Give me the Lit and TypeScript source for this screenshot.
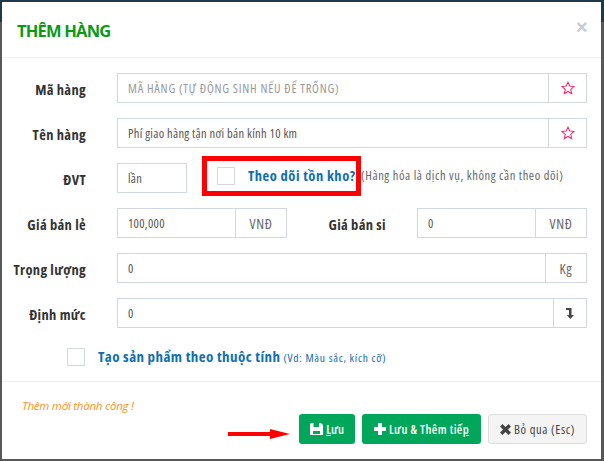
import { LitElement, html, css } from "lit";
import { customElement } from "lit/decorators.js";

const star = html`<svg class="star" viewBox="0 0 14 14" width="14" height="14"><path d="M7 1.2l1.75 3.9 4.15.45-3.1 2.85.87 4.15L7 10.45l-3.67 2.1.87-4.15L1.1 5.55l4.15-.45z" fill="none" stroke="#f0306e" stroke-width="1.1"/></svg>`;

@customElement("app-root")
export class AppRoot extends LitElement {
  static styles = css`
    :host { display: block; width: 604px; height: 461px; padding: 2px 0 0 2px; box-sizing: border-box; background: linear-gradient(#1c3a4a 0 22px, #585858 22px); overflow: hidden; font-family: "Open Sans", "Noto Sans", sans-serif; font-stretch: condensed; font-size: 12.5px; letter-spacing: .3px; color: #555; }
    .modal { width: 599px; height: 457px; background: #fff; display: flex; flex-direction: column; box-sizing: border-box; }
    .head { height: 56px; flex: none; box-sizing: border-box; border-bottom: 1px solid #eff2f5; display: flex; align-items: center; justify-content: space-between; padding: 0 13px 0 15px; }
    .title { font-size: 16.5px; font-weight: 700; color: #0a9a17; font-stretch: normal; letter-spacing: -.8px; margin-top: 1px; }
    .close { font-size: 20px; color: #ccc; line-height: 1; margin-top: -6px; font-family: "Liberation Sans", sans-serif; font-weight: 700; }
    .body { flex: 1; padding: 15px 14px 0 0; display: flex; flex-direction: column; gap: 15px; }
    .row { display: flex; height: 30px; align-items: stretch; }
    .label { width: 84px; flex: none; text-align: right; font-size: 14.5px; letter-spacing: .35px; font-weight: 700; color: #333; line-height: 34px; white-space: nowrap; }
    .group { display: flex; margin-left: 31px; }
    .grow { flex: 1; }
    .box { border: 1px solid #d3d7e0; box-sizing: border-box; height: 30px; display: flex; align-items: center; padding: 0 10px; color: #555; white-space: nowrap; }
    .input { flex: 1; min-width: 0; }
    .ph { color: #999; letter-spacing: .75px; }
    .addon { border-left: 0; justify-content: center; padding: 0; color: #666; font-size: 14px; letter-spacing: .6px; }
    .star { display: block; }
    .w38 { width: 38px; } .w70 { width: 70px; } .w119 { width: 119px; } .w51 { width: 51px; } .w41 { width: 41px; } .w33 { width: 33px; }
    .label2 { width: 99px; }
    .track { margin-left: 15px; width: 159px; height: 40px; margin-top: -7px; border: 5px solid #f00; box-sizing: border-box; display: flex; align-items: center; padding-left: 10px; flex: none; white-space: nowrap; }
    .check { width: 18px; height: 18px; border: 1px solid #d3d7e0; box-sizing: border-box; flex: none; background: #fff; }
    .blue { font-size: 14.5px; letter-spacing: .55px; font-weight: 700; color: #0e6eb0; white-space: nowrap; }
    .track .blue { margin-left: 13px; margin-top: -2px; }
    .note { color: #666; font-size: 12.5px; letter-spacing: .6px; white-space: nowrap; line-height: 26px; }
    .attr { display: flex; align-items: center; height: 30px; margin-left: 65px; margin-top: -1px; }
    .attr .blue { margin-left: 13px; margin-top: -2px; font-size: 15px; letter-spacing: .43px; }
    .attr small { font-size: 11.5px; letter-spacing: .75px; color: #0e6eb0; margin-left: 3px; }
    .foot { flex: none; height: 78px; box-sizing: border-box; border-top: 1px solid #eff2f5; padding: 17px 14px 0 20px; display: flex; flex-direction: column; }
    .msg { font-size: 11.5px; font-stretch: normal; letter-spacing: -.25px; font-style: italic; color: #f7941d; line-height: 14px; }
    .btns { display: flex; align-items: center; justify-content: flex-end; margin-top: 1px; height: 30px; }
    .btn { height: 30px; box-sizing: border-box; border-radius: 3px; display: flex; align-items: center; justify-content: center; color: #fff; background: #00a65a; font-weight: 600; font-size: 12.5px; letter-spacing: .4px; gap: 3px; flex: none; }
    .b1 { width: 56px; letter-spacing: 0; }
    .b2 { width: 119px; margin-left: 7px; }
    .b3 { width: 99px; margin-left: 7px; background: #f4f4f4; border: 1px solid #ddd; color: #444; font-weight: 400; letter-spacing: .65px; }
    u { text-decoration: underline; }
    .arrow { display: block; margin: 10px 9px 0 0; }
  `;
  render() {
    return html`
      <div class="modal">
        <div class="head"><div class="title">THÊM HÀNG</div><div class="close">×</div></div>
        <div class="body">
          <div class="row">
            <div class="label">Mã hàng</div>
            <div class="group grow"><div class="box input ph">MÃ HÀNG (TỰ ĐỘNG SINH NẾU ĐỂ TRỐNG)</div><div class="box addon w38">${star}</div></div>
          </div>
          <div class="row">
            <div class="label">Tên hàng</div>
            <div class="group grow"><div class="box input">Phí giao hàng tận nơi bán kính 10 km</div><div class="box addon w38">${star}</div></div>
          </div>
          <div class="row">
            <div class="label">ĐVT</div>
            <div class="group"><div class="box w70">lần</div></div>
            <div class="track"><span class="check"></span><span class="blue">Theo dõi tồn kho?</span></div>
            <span class="note">(Hàng hóa là dịch vụ, không cần theo dõi)</span>
          </div>
          <div class="row">
            <div class="label">Giá bán lẻ</div>
            <div class="group"><div class="box w119">100,000</div><div class="box addon w51">VNĐ</div></div>
            <div class="label label2">Giá bán si</div>
            <div class="group"><div class="box w119">0</div><div class="box addon w51">VNĐ</div></div>
          </div>
          <div class="row">
            <div class="label">Trọng lượng</div>
            <div class="group grow"><div class="box input">0</div><div class="box addon w41">Kg</div></div>
          </div>
          <div class="row">
            <div class="label">Định mức</div>
            <div class="group grow"><div class="box input">0</div><div class="box addon w33"><svg width="8" height="11" viewBox="0 0 8 11"><path d="M0 0h5.500v7H8l-3.700 4L.8 7h2.200V2H0z" fill="#444"/></svg></div></div>
          </div>
          <div class="attr"><span class="check"></span><span class="blue">Tạo sản phẩm theo thuộc tính</span><small>(Vd: Màu sắc, kích cỡ)</small></div>
        </div>
        <div class="foot">
          <div class="msg">Thêm mới thành công !</div>
          <div class="btns">
            <svg class="arrow" width="62" height="10" viewBox="0 0 62 10"><path d="M0 3h42V0l20 5-20 5V7H0z" fill="#f00"/></svg>
            <div class="btn b1"><svg width="13" height="12" viewBox="0 0 13 12"><path d="M1 0h10l2 2v10H0V1zM3.500 0v4h5.500V0zM3 8v3h7V8z" fill="#fff" fill-rule="evenodd"/></svg><span><u>L</u>ưu</span></div>
            <div class="btn b2"><svg width="12" height="12" viewBox="0 0 12 12"><path d="M4 0h4v4h4v4H8v4H4V8H0V4h4z" fill="#fff"/></svg><span>Lưu &amp; Thêm tiế<u>p</u></span></div>
            <div class="btn b3"><svg width="11" height="11" viewBox="0 0 11 11"><path d="M2.500 0l3 3 3-3L11 2.500l-3 3 3 3L8.500 11l-3-3-3 3L0 8.500l3-3-3-3z" fill="#444"/></svg><span>Bỏ qua (Esc)</span></div>
          </div>
        </div>
      </div>
    `;
  }
}
